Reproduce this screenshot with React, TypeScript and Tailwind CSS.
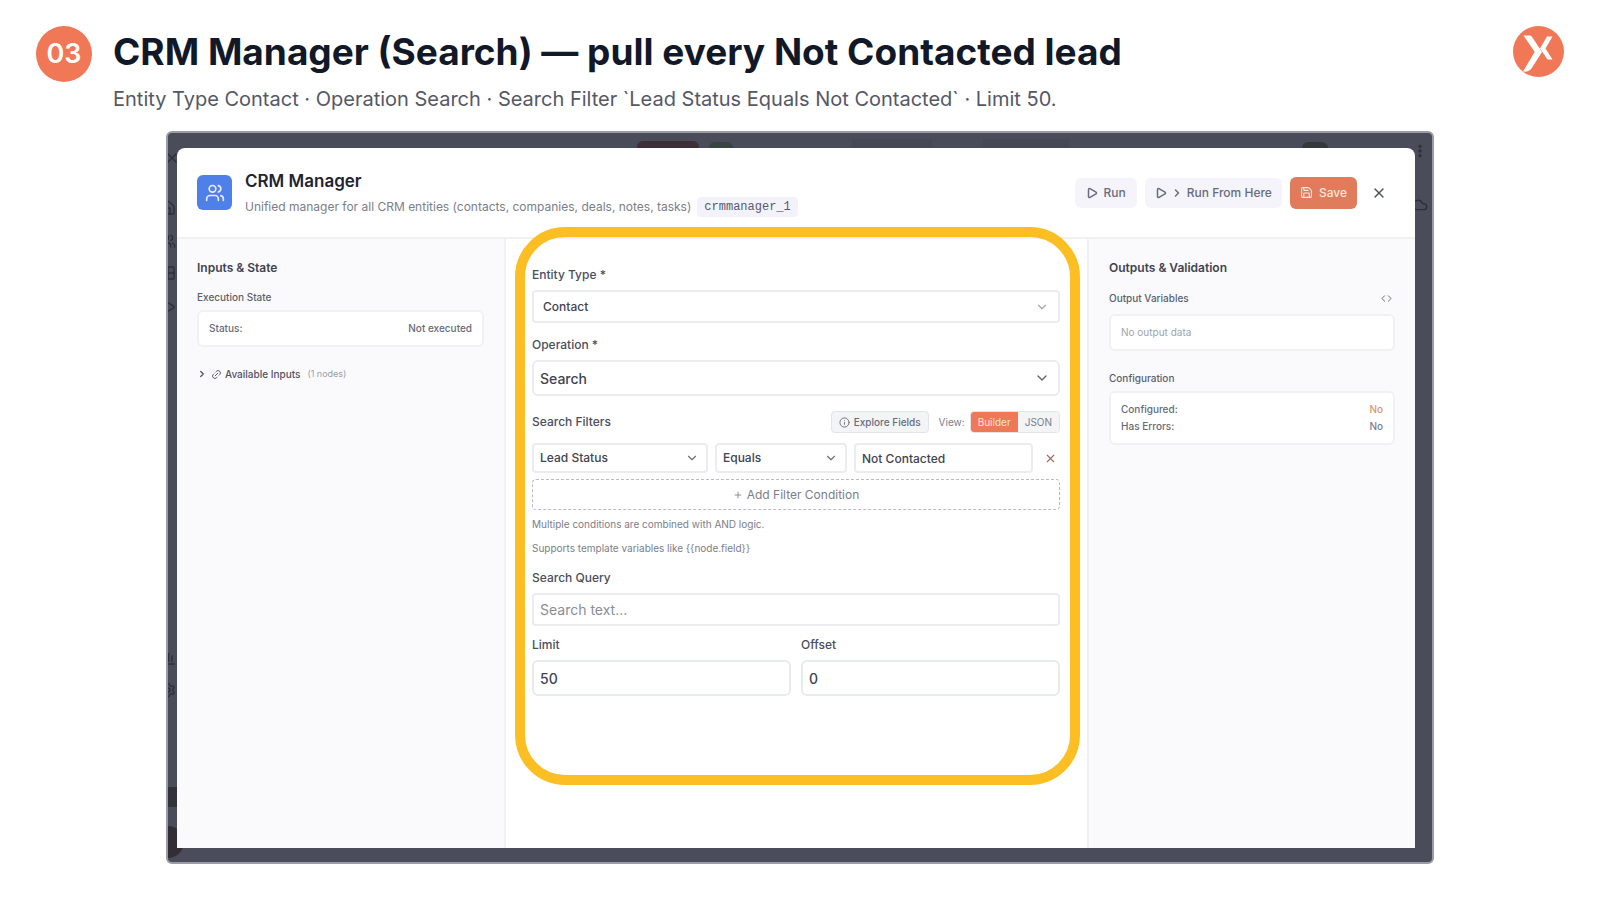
import { useState } from 'react'
import { ChevronDown, ChevronRight, Code, Info, Link2, Play, Plus, Save, Users, X, Ellipsis, House, Cloud, Grid2x2, ChartColumn, Settings } from 'lucide-react'

type Option = { value: string; label: string }

function Select({ id, label, options, className, iconClass }: {
  id: string
  label?: string
  options: Option[]
  className: string
  iconClass: string
}) {
  const [value, setValue] = useState(options[0].value)

  return (
    <div className="relative">
      <select
        id={id}
        aria-label={label}
        value={value}
        onChange={(e) => setValue(e.target.value)}
        className={`block w-full appearance-none border-2 border-[#ebecef] bg-white font-medium text-[#3f4352] ${className}`}
      >
        {options.map((o) => (
          <option key={o.value} value={o.value}>{o.label}</option>
        ))}
      </select>
      <ChevronDown className={`pointer-events-none absolute inset-y-0 my-auto ${iconClass}`} />
    </div>
  )
}

function Logo() {
  return (
    <svg viewBox="0 0 51 51" className="h-[51px] w-[51px]" role="img" aria-label="Logo">
      <circle cx="25.500" cy="25.500" r="25.500" fill="#f07856" />
      <path d="M10.500 9.500h5.500c1.600 0 2.600.6 3.400 2L29 26 18.500 42.500c-1.700 2.500-4.700 3.600-8.500 3l11.700-19.500z" fill="#fff" />
      <path d="M34 10.500h5.500L32.500 22.500l7 11h-5L27 22.500z" fill="#fff" />
    </svg>
  )
}

// dimmed page that shows around the edges of the modal
function Backdrop() {
  return (
    <div className="absolute inset-0 overflow-hidden rounded text-[#2c2e38]" aria-hidden="true">
      <div className="absolute left-[469px] top-2 h-6 w-[62px] rounded-md bg-[#3c3036]" />
      <div className="absolute left-[541px] top-[9px] h-6 w-6 rounded-md bg-[#39433f]" />
      <div className="absolute left-[684px] top-[6px] h-6 w-20 bg-[#464854]" />
      <div className="absolute left-[815px] top-[6px] h-6 w-[86px] bg-[#464854]" />
      <div className="absolute right-[104px] top-[9px] h-6 w-[26px] rounded-md bg-[#35393e]" />
      <X className="absolute -left-1 top-[17px] h-4 w-4" />
      <House className="absolute -left-2 top-[67px] h-4 w-4" />
      <Users className="absolute -left-2 top-[100px] h-4 w-4" />
      <Grid2x2 className="absolute -left-2 top-[132px] h-4 w-4" />
      <Play className="absolute -left-2 top-[166px] h-4 w-4" />
      <ChartColumn className="absolute -left-2 bottom-[196px] h-4 w-4" />
      <Settings className="absolute -left-2 bottom-[164px] h-4 w-4" />
      <div className="absolute left-0 bottom-[55px] h-5 w-3 bg-[#33323b]" />
      <div className="absolute -left-4 bottom-1 h-8 w-8 rounded-full bg-[#332d36]" />
      <Ellipsis className="absolute right-1 top-[10px] h-4 w-4 rotate-90" strokeWidth={3} />
      <Cloud className="absolute right-1 top-[64px] h-4 w-4" />
    </div>
  )
}

export default function App() {
  const [view, setView] = useState('builder')
  const [query, setQuery] = useState('')
  const [limit, setLimit] = useState('50')
  const [offset, setOffset] = useState('0')
  const [filterValue, setFilterValue] = useState('Not Contacted')

  return (
    <div className="flex min-h-screen flex-col bg-white pb-9 font-['Inter','Liberation_Sans',sans-serif]">
      <header className="flex items-start px-9 pt-[26px]">
        <div className="flex h-14 w-14 shrink-0 items-center justify-center rounded-full bg-[#f07856] text-[27px] font-semibold text-white">
          03
        </div>
        <div className="ml-[21px] flex-1">
          <h1 className="text-[37px] font-bold leading-[52px] text-[#111827]">
            CRM Manager (Search) — pull every Not Contacted lead
          </h1>
          <p className="mt-1 text-[20px] leading-[34px] text-[#555866]">
            Entity Type Contact · Operation Search · Search Filter `Lead Status Equals Not Contacted` · Limit 50.
          </p>
        </div>
        <Logo />
      </header>

      <main className="relative mx-[166px] mt-[15px] flex flex-1 flex-col rounded-md border-2 border-[#9a9ca6] bg-[#4a4c59] pb-[14px] pl-[9px] pr-[17px] pt-[15px]">
        <Backdrop />
        <section className="relative flex flex-1 flex-col rounded-t-lg bg-white">
          <div className="flex h-[91px] items-center border-b-2 border-[#f1f1f4] pl-5 pr-[22px]">
            <div className="flex h-[35px] w-[35px] items-center justify-center rounded-md bg-[#4f7fe8] text-[#e6ecfb]">
              <Users className="h-5 w-5" strokeWidth={2} />
            </div>
            <div className="ml-[13px] flex-1">
              <h2 className="text-[17px] font-semibold leading-6 text-[#1f2433]">CRM Manager</h2>
              <div className="mt-1 flex items-center gap-[6px]">
                <p className="text-[12px] leading-5 text-[#7b7e8b]">
                  Unified manager for all CRM entities (contacts, companies, deals, notes, tasks)
                </p>
                <code className="rounded bg-[#f3f2fb] px-[7px] font-['Liberation_Mono',monospace] text-[12px] leading-5 text-[#565a6e]">
                  crmmanager_1
                </code>
              </div>
            </div>
            <div className="flex items-center gap-2 text-[12px] font-medium">
              <button className="flex h-[30px] items-center gap-[6px] rounded-md bg-[#f5f4fb] px-[11px] text-[#686c80]">
                <Play className="h-3 w-3" strokeWidth={3} /> Run
              </button>
              <button className="flex h-[30px] items-center gap-1 rounded-md bg-[#f5f4fb] px-[10px] text-[#686c80]">
                <Play className="h-3 w-3" strokeWidth={3} />
                <ChevronRight className="h-3 w-3" strokeWidth={3} />
                Run From Here
              </button>
              <button className="flex h-8 items-center gap-[6px] rounded-md bg-[#e07b5c] px-[10px] text-[#fbe6df]">
                <Save className="h-[13px] w-[13px]" /> Save
              </button>
              <button aria-label="Close" className="flex h-7 w-7 items-center justify-center text-[#4b4f5e]">
                <X className="h-4 w-4" />
              </button>
            </div>
          </div>

          <div className="flex flex-1">
            <aside className="w-[329px] shrink-0 border-r-2 border-[#f1f1f4] bg-[#fafafc] px-5 pt-[19px]">
              <h3 className="text-[12px] font-semibold leading-5 text-[#3f4352]">Inputs &amp; State</h3>
              <h4 className="mt-[11px] text-[10px] font-medium leading-4 text-[#5b5f6e]">Execution State</h4>
              <div className="mt-[5px] flex h-[37px] items-center justify-between rounded-md border-2 border-[#f1f1f4] bg-white px-[10px] text-[10px] font-medium text-[#666a79]">
                <span>Status:</span>
                <span>Not executed</span>
              </div>
              <button className="mt-[19px] flex items-center text-[10px] font-medium leading-4 text-[#4f5362]">
                <ChevronRight className="h-[10px] w-[10px]" strokeWidth={3} />
                <Link2 className="ml-1 mr-[3px] h-[11px] w-[11px] -rotate-45" />
                Available Inputs
                <span className="ml-[7px] text-[9px] font-normal text-[#9a9da8]">(1 nodes)</span>
              </button>
            </aside>

            <form className="relative min-w-0 flex-1 pl-[26px] pr-[27px] pt-[26px] text-[12px]" onSubmit={(e) => e.preventDefault()}>
              <label htmlFor="entity" className="block font-medium leading-5 text-[#4a4e5d]">Entity Type *</label>
              <div className="mt-[5px]">
                <Select id="entity" options={[{ value: 'contact', label: 'Contact' }, { value: 'company', label: 'Company' }]} className="h-[33px] rounded px-[9px]" iconClass="right-[11px] h-[14px] w-[14px] text-[#a3a6b1]" />
              </div>

              <label htmlFor="operation" className="mt-3 block font-medium leading-5 text-[#4a4e5d]">Operation *</label>
              <div className="mt-[5px]">
                <Select id="operation" options={[{ value: 'search', label: 'Search' }, { value: 'create', label: 'Create' }]} className="h-9 rounded-md px-[6px] text-[14px]" iconClass="right-[10px] h-4 w-4 text-[#5f6372]" />
              </div>

              <div className="mt-[15px] flex items-center">
                <span className="flex-1 font-medium text-[#4a4e5d]">Search Filters</span>
                <button type="button" className="flex h-[22px] items-center gap-1 rounded border border-[#e3e4e9] bg-[#f3f4f6] px-[7px] text-[10px] font-medium text-[#686c7b]">
                  <Info className="h-[11px] w-[11px]" /> Explore Fields
                </button>
                <span className="ml-[10px] mr-[5px] text-[10px] text-[#7b7e8b]">View:</span>
                <div className="flex h-[22px] overflow-hidden rounded border border-[#e3e4e9] text-[10px]">
                  <button
                    type="button"
                    onClick={() => setView('builder')}
                    className={`px-[7px] ${view === 'builder' ? 'bg-[#f07856] text-[#fde3da]' : 'bg-[#f3f4f6] text-[#7b7e8b]'}`}
                  >
                    Builder
                  </button>
                  <button
                    type="button"
                    onClick={() => setView('json')}
                    className={`px-[7px] ${view === 'json' ? 'bg-[#f07856] text-[#fde3da]' : 'bg-[#f3f4f6] text-[#7b7e8b]'}`}
                  >
                    JSON
                  </button>
                </div>
              </div>

              <div className="mt-[10px] grid grid-cols-[176fr_132fr_179fr_20px] gap-[7px]">
                <Select id="field" label="Field" options={[{ value: 'lead', label: 'Lead Status' }, { value: 'email', label: 'Email' }]} className="h-[30px] rounded px-[6px]" iconClass="right-[9px] h-[14px] w-[14px] text-[#6b6f7e]" />
                <Select id="condition" label="Condition" options={[{ value: 'eq', label: 'Equals' }, { value: 'ne', label: 'Not Equals' }]} className="h-[30px] rounded px-[6px]" iconClass="right-[9px] h-[14px] w-[14px] text-[#6b6f7e]" />
                <input
                  aria-label="Value"
                  value={filterValue}
                  onChange={(e) => setFilterValue(e.target.value)}
                  className="h-[30px] w-full min-w-0 rounded border-2 border-[#ebecef] px-[6px] font-medium text-[#3f4352]"
                />
                <button type="button" aria-label="Remove condition" className="flex items-center justify-center text-[#a0685c]">
                  <X className="h-[13px] w-[13px]" />
                </button>
              </div>
              <button type="button" className="mt-[6px] flex h-[31px] w-full items-center justify-center gap-1 rounded border border-dashed border-[#b9bbc4] text-[#7b7e8b]">
                <Plus className="h-[10px] w-[10px]" /> Add Filter Condition
              </button>
              <p className="mt-[6px] text-[10px] leading-4 text-[#7b7e8b]">Multiple conditions are combined with AND logic.</p>
              <p className="mt-2 text-[10px] leading-4 text-[#7b7e8b]">{'Supports template variables like {{node.field}}'}</p>

              <label htmlFor="query" className="mt-3 block font-medium leading-5 text-[#4a4e5d]">Search Query</label>
              <input
                id="query"
                value={query}
                placeholder="Search text..."
                onChange={(e) => setQuery(e.target.value)}
                className="mt-[5px] block h-[33px] w-full rounded border-2 border-[#ebecef] px-[6px] text-[14px] text-[#3f4352] placeholder:text-[#8a8d99]"
              />

              <div className="mt-[9px] grid grid-cols-2 gap-[10px]">
                <div>
                  <label htmlFor="limit" className="block font-medium leading-5 text-[#4a4e5d]">Limit</label>
                  <input
                    id="limit"
                    value={limit}
                    onChange={(e) => setLimit(e.target.value)}
                    className="mt-[5px] block h-9 w-full rounded-md border-2 border-[#e8ebec] px-[6px] text-[14px] font-medium text-[#3f4352]"
                  />
                </div>
                <div>
                  <label htmlFor="offset" className="block font-medium leading-5 text-[#4a4e5d]">Offset</label>
                  <input
                    id="offset"
                    value={offset}
                    onChange={(e) => setOffset(e.target.value)}
                    className="mt-[5px] block h-9 w-full rounded-md border-2 border-[#e8ebec] px-[6px] text-[14px] font-medium text-[#3f4352]"
                  />
                </div>
              </div>

              {/* highlight ring around the form */}
              <div className="pointer-events-none absolute -top-3 left-[9px] right-[7px] h-[558px] rounded-[50px] border-[10px] border-[#fbbf24]" />
            </form>

            <aside className="w-[328px] shrink-0 border-l-2 border-[#f1f1f4] bg-[#fafafc] px-5 pt-[19px]">
              <h3 className="text-[12px] font-semibold leading-5 text-[#3f4352]">Outputs &amp; Validation</h3>
              <div className="mt-3 flex items-center justify-between text-[#5b5f6e]">
                <h4 className="text-[10px] font-medium leading-4">Output Variables</h4>
                <button aria-label="Show code" className="px-[3px]">
                  <Code className="h-[11px] w-[11px]" />
                </button>
              </div>
              <div className="mt-2 flex h-[37px] items-center rounded-md border-2 border-[#f1f1f4] bg-white px-[10px] text-[10px] text-[#a0a3ae]">
                No output data
              </div>
              <h4 className="mt-[19px] text-[10px] font-medium leading-4 text-[#5b5f6e]">Configuration</h4>
              <dl className="mt-[5px] grid grid-cols-2 rounded-md border-2 border-[#f1f1f4] bg-white px-[10px] py-2 text-[10px] font-medium leading-[17px] text-[#666a79]">
                <dt>Configured:</dt>
                <dd className="text-right text-[#e0946f]">No</dd>
                <dt>Has Errors:</dt>
                <dd className="text-right text-[#7b7e8b]">No</dd>
              </dl>
            </aside>
          </div>
        </section>
      </main>
    </div>
  )
}
